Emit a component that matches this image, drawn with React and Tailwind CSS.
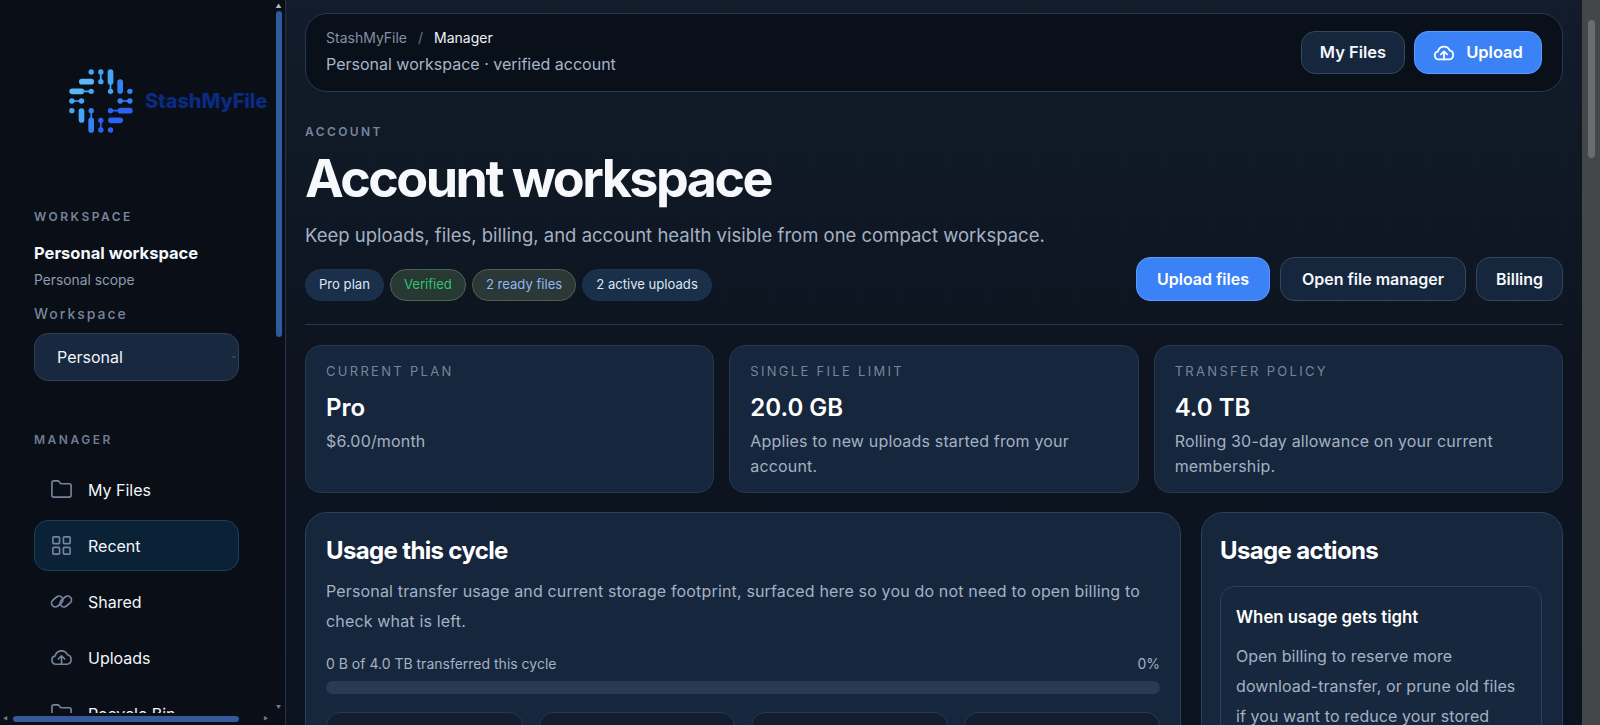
import { Folder, LayoutGrid, ChevronDown } from "lucide-react"

function Logo() {
  return (
    <svg viewBox="200 200 200 204" className="w-[67px] h-[68px] shrink-0">
      <g strokeLinecap="round" fill="none">
        <g stroke="#45a6f6">
          <path d="M272 215h.1" strokeWidth="16" />
          <path d="M301 215h.1M301 244h.1" strokeWidth="16" />
          <path d="M301 215v29" strokeWidth="5" />
          <path d="M330 215v30" strokeWidth="17" />
          <path d="M330 240v33" strokeWidth="5" />
          <path d="M330 273h.1" strokeWidth="16" />
          <path d="M244 244h28" strokeWidth="17" stroke="#5ab8f8" />
          <path d="M215 273h28" strokeWidth="17" stroke="#5ab8f8" />
          <path d="M243 273h29" strokeWidth="5" />
          <path d="M272 273h.1" strokeWidth="16" />
          <path d="M214 302h.1M243 302h.1" strokeWidth="16" />
          <path d="M214 302h29" strokeWidth="5" />
          <path d="M214 331h.1" strokeWidth="16" />
          <path d="M243 332v27" strokeWidth="17" />
        </g>
        <g stroke="#3580f5">
          <path d="M359 245v27" strokeWidth="17" />
          <path d="M388 273h.1" strokeWidth="16" />
          <path d="M359 302h.1M388 302h.1" strokeWidth="16" />
          <path d="M359 302h29" strokeWidth="5" />
          <path d="M272 331h.1" strokeWidth="16" />
          <path d="M272 331v30" strokeWidth="5" />
          <path d="M272 360v29" strokeWidth="17" />
        </g>
        <g stroke="#2b62f2">
          <path d="M330 331h.1" strokeWidth="16" />
          <path d="M330 331h30" strokeWidth="5" />
          <path d="M360 331h28" strokeWidth="17" />
          <path d="M331 360h28" strokeWidth="17" />
          <path d="M301 360h.1M301 389h.1" strokeWidth="16" />
          <path d="M301 360v29" strokeWidth="5" />
          <path d="M330 389h.1" strokeWidth="16" />
        </g>
      </g>
    </svg>
  )
}

// flat cloud with the arrow standing on its base line
function CloudIcon({ className, strokeWidth = 1.9 }) {
  return (
    <svg viewBox="0 0 24 24" fill="none" stroke="currentColor" strokeWidth={strokeWidth} strokeLinecap="round" strokeLinejoin="round" className={className}>
      <path d="M6.2 19a4.4 4.4 0 0 1-.7-8.7 6.6 6.6 0 0 1 12.6-1.1A5 5 0 0 1 18 19z" />
      <path d="M12 19v-8.5M8.6 13.6 12 10.2l3.4 3.4" />
    </svg>
  )
}

function SharedIcon({ className }) {
  return (
    <svg viewBox="0 0 24 24" fill="none" stroke="currentColor" strokeWidth="1.8" className={className}>
      <rect x="1" y="8" width="13" height="8" rx="4" transform="rotate(-40 7.5 12)" />
      <rect x="10" y="8" width="13" height="8" rx="4" transform="rotate(-40 16.5 12)" />
    </svg>
  )
}

function NavItem({ icon: Icon, label, active }) {
  return (
    <div
      className={`flex items-center gap-[15px] h-[51px] mb-[5px] pl-[15px] rounded-[14px] border text-[16px] text-[#f1f5f9] ${
        active ? "bg-[#0a2136] border-[#14435f]" : "border-transparent"
      }`}
    >
      <Icon className="w-[23px] h-[23px] text-[#76859b]" strokeWidth={1.7} />
      <span>{label}</span>
    </div>
  )
}

function Sidebar() {
  return (
    <aside className="w-[286px] h-[725px] shrink-0 flex flex-col bg-[#090e17] border-r border-[#223349]">
      <div className="flex flex-1 min-h-0">
        <div className="flex-1 min-w-0 overflow-hidden pl-[34px] pr-[35px]">
          <div className="flex items-center h-[68px] mt-[67px] ml-[33px] w-[230px]">
            <Logo />
            <span className="ml-[11px] text-[20px] font-extrabold text-[#0b2a80] tracking-[-0.1px] whitespace-nowrap">StashMyFile</span>
          </div>
          <div className="mt-[73px] text-[12px] font-semibold tracking-[2.5px] text-[#78859a] leading-[18px]">WORKSPACE</div>
          <div className="mt-[15px] text-[16.5px] font-bold text-[#f4f7fb] leading-[24px]">Personal workspace</div>
          <div className="mt-[5px] text-[13.8px] text-[#8d9bae] leading-[20px]">Personal scope</div>
          <div className="mt-[14px] text-[14px] font-medium tracking-[2px] text-[#76859b] leading-[20px]">Workspace</div>
          <div className="mt-[9px] h-[48px] flex items-center justify-between pl-[22px] pr-[1px] rounded-[14px] border border-[#2c4058] bg-[#18283f] text-[16px] text-[#f1f5f9]">
            <span>Personal</span>
            <ChevronDown className="w-[6px] h-[6px] text-[#8d9bae]" />
          </div>
          <div className="mt-[50px] mb-[15px] text-[12px] font-semibold tracking-[2.5px] text-[#6f7c92] leading-[18px]">MANAGER</div>
          <NavItem icon={Folder} label="My Files" />
          <NavItem icon={LayoutGrid} label="Recent" active />
          <NavItem icon={SharedIcon} label="Shared" />
          <NavItem icon={CloudIcon} label="Uploads" />
          <NavItem icon={Folder} label="Recycle Bin" />
        </div>
        <div className="w-[9px] mr-[2px] flex flex-col items-center pt-[2px]">
          <div className="text-[6px] leading-[8px] text-[#b0b8c4]">▲</div>
          <div className="w-[6px] h-[326px] mt-[1px] rounded-full bg-[#2f5a9e]" />
          <div className="flex-1" />
          <div className="text-[5px] leading-[8px] text-[#6f7c92] mb-[2px]">▼</div>
        </div>
      </div>
      <div className="h-[12px] flex items-center px-[3px] bg-[#090e17]">
        <span className="text-[5px] text-[#6f7c92]">◀</span>
        <div className="w-[226px] h-[6px] ml-[5px] rounded-full bg-[#35599a]" />
        <span className="ml-[25px] text-[5px] text-[#6f7c92]">▶</span>
      </div>
    </aside>
  )
}

function Pill({ children, cls }) {
  return <span className={`h-[32px] px-[13px] flex items-center rounded-full border text-[13.1px] ${cls}`}>{children}</span>
}

function StatCard({ label, value, note }) {
  return (
    <div className="h-[148px] px-[20px] pt-[15px] rounded-[16px] border border-[#26394f] bg-[#16263c]">
      <div className="text-[13px] tracking-[2.3px] text-[#76859b] leading-[20px]">{label}</div>
      <div className="mt-[11px] text-[24px] font-semibold text-white leading-[32px]">{value}</div>
      <div className="mt-[5px] text-[16px] tracking-[0.17px] text-[#a4b1c3] leading-[25px]">{note}</div>
    </div>
  )
}

function Main() {
  return (
    <main className="flex-1 min-w-0 h-[725px] overflow-hidden px-[19px] pt-[13px] bg-[repeating-linear-gradient(90deg,rgba(255,255,255,0.01)_0_1px,transparent_1px_44px),linear-gradient(180deg,#121c2a_0%,#0d1420_50%,#0c1320_100%)]">
      <header className="h-[79px] flex items-center justify-between pl-[20px] pr-[20px] rounded-[22px] border border-[#26394f] bg-[#0a101a]">
        <div className="pb-[3px]">
          <div className="flex items-center text-[14px] leading-[20px]">
            <span className="text-[#8290a5]">StashMyFile</span>
            <span className="mx-[11px] text-[#667488]">/</span>
            <span className="text-[#eef2f7]">Manager</span>
          </div>
          <div className="mt-[5px] text-[16px] text-[#a8b5c6] leading-[22px]">Personal workspace · verified account</div>
        </div>
        <div className="flex gap-[9px]">
          <button className="w-[104px] h-[43px] rounded-[14px] border border-[#33475f] bg-[#16263c] text-[16.5px] font-semibold text-[#f4f7fb]">My Files</button>
          <button className="w-[128px] h-[43px] flex items-center justify-center gap-[11px] rounded-[14px] border border-[#5b9bff] bg-[#3b82f6] text-[16.5px] font-semibold text-white">
            <CloudIcon className="w-[22px] h-[22px]" />
            Upload
          </button>
        </div>
      </header>

      <section className="mt-[31px] pb-[23px] border-b border-[#26394f]">
        <div className="text-[12px] font-semibold tracking-[2.4px] text-[#76859b] leading-[18px]">ACCOUNT</div>
        <h1 className="mt-[7px] text-[52px] font-bold text-[#f6f8fb] leading-[62px] tracking-[-2.5px]">Account workspace</h1>
        <p className="mt-[11px] text-[18.5px] text-[#a4b1c3] leading-[28px]">Keep uploads, files, billing, and account health visible from one compact workspace.</p>
        <div className="mt-[8px] flex items-end justify-between">
          <div className="flex gap-[6px]">
            <Pill cls="border-[#1d3350] bg-[#1a2f4a] text-[#dfe7f1]">Pro plan</Pill>
            <Pill cls="border-[#4d6450] bg-[#283832] text-[#34c172]">Verified</Pill>
            <Pill cls="border-[#525f45] bg-[#2b3837] text-[#8db8f5]">2 ready files</Pill>
            <Pill cls="border-[#1d3350] bg-[#1a2f4a] text-[#dfe7f1]">2 active uploads</Pill>
          </div>
          <div className="flex gap-[10px]">
            <button className="w-[134px] h-[44px] rounded-[14px] border border-[#5b9bff] bg-[#3b82f6] text-[16px] font-semibold text-white">Upload files</button>
            <button className="w-[186px] h-[44px] rounded-[14px] border border-[#33475f] bg-[#16263c] text-[16px] font-semibold text-[#f4f7fb]">Open file manager</button>
            <button className="w-[87px] h-[44px] rounded-[14px] border border-[#33475f] bg-[#16263c] text-[16px] font-semibold text-[#f4f7fb]">Billing</button>
          </div>
        </div>
      </section>

      <div className="mt-[20px] grid grid-cols-3 gap-[15px]">
        <StatCard label="CURRENT PLAN" value="Pro" note="$6.00/month" />
        <StatCard label="SINGLE FILE LIMIT" value="20.0 GB" note="Applies to new uploads started from your account." />
        <StatCard label="TRANSFER POLICY" value="4.0 TB" note="Rolling 30-day allowance on your current membership." />
      </div>

      <div className="mt-[19px] flex gap-[20px] items-start">
        <div className="w-[876px] shrink-0 h-[300px] px-[20px] pt-[21px] rounded-[22px] border border-[#2c4058] bg-[#16263c]">
          <h2 className="text-[24px] font-bold text-white leading-[34px] tracking-[-0.65px]">Usage this cycle</h2>
          <p className="mt-[8px] text-[16px] tracking-[0.16px] text-[#a4b1c3] leading-[30px]">Personal transfer usage and current storage footprint, surfaced here so you do not need to open billing to check what is left.</p>
          <div className="mt-[18px] flex justify-between text-[14px] text-[#a4b1c3] leading-[20px]">
            <span>0 B of 4.0 TB transferred this cycle</span>
            <span>0%</span>
          </div>
          <div className="mt-[7px] h-[13px] rounded-full bg-[#2a3a51]" />
          <div className="mt-[18px] grid grid-cols-4 gap-[16px]">
            <div className="h-[90px] rounded-[14px] border border-[#26394f] bg-[#121e30]" />
            <div className="h-[90px] rounded-[14px] border border-[#26394f] bg-[#121e30]" />
            <div className="h-[90px] rounded-[14px] border border-[#26394f] bg-[#121e30]" />
            <div className="h-[90px] rounded-[14px] border border-[#26394f] bg-[#121e30]" />
          </div>
        </div>
        <div className="flex-1 min-w-0 h-[300px] pl-[18px] pr-[20px] pt-[21px] rounded-[22px] border border-[#2c4058] bg-[#16263c]">
          <h2 className="text-[24px] font-bold text-white leading-[34px] tracking-[-0.65px]">Usage actions</h2>
          <div className="mt-[18px] h-[200px] px-[15px] pt-[16px] rounded-[14px] border border-[#2c4058] bg-[#17273d]">
            <h3 className="text-[16.8px] font-semibold text-white leading-[28px]">When usage gets tight</h3>
            <p className="mt-[10px] text-[16px] tracking-[0.08px] text-[#a4b1c3] leading-[30px]">Open billing to reserve more download-transfer, or prune old files if you want to reduce your stored</p>
          </div>
        </div>
      </div>
    </main>
  )
}

export default function App() {
  return (
    <div className="flex w-[1600px] h-[725px] overflow-hidden bg-[#0c1320] font-['Inter',sans-serif]">
      <Sidebar />
      <Main />
      <div className="w-[18px] h-[725px] shrink-0 flex flex-col items-center bg-[#454648] pt-[20px]">
        <div className="w-[7px] h-[138px] rounded-full bg-[#6a6b6d]" />
      </div>
    </div>
  )
}
